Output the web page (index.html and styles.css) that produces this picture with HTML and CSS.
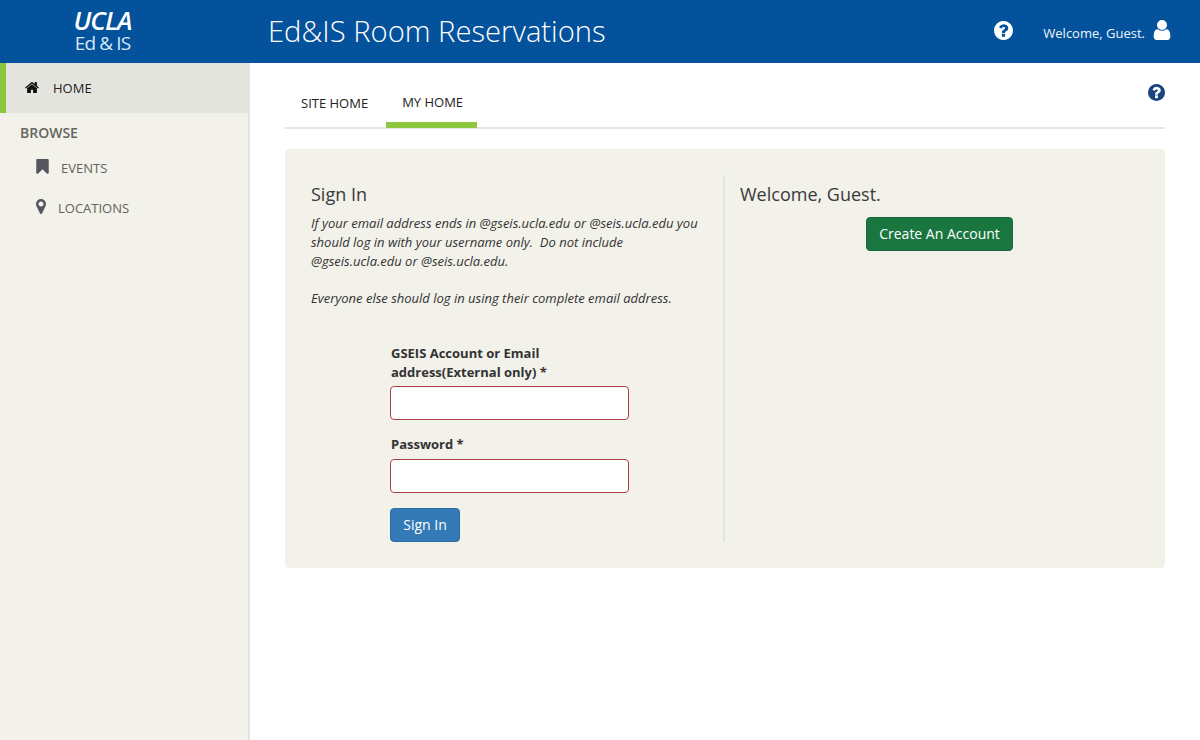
FILE: index.html
```html
<!DOCTYPE html>
<html lang="en">
<head>
<meta charset="utf-8">
<title>Ed&amp;IS Room Reservations</title>
<link rel="stylesheet" href="styles.css">
</head>
<body>
<header class="topbar">
  <div class="logo-area">
    <div class="logo">
      <span class="logo-ucla">UCLA</span>
      <span class="logo-sub">Ed &amp; IS</span>
    </div>
  </div>
  <h1 class="site-title">Ed&amp;IS Room Reservations</h1>
  <div class="top-right">
    <svg class="icon top-help" viewBox="0 0 1536 1536"><path transform="translate(-128 -128)" d="M1024 1376v-192q0-14-9-23t-23-9h-192q-14 0-23 9t-9 23v192q0 14 9 23t23 9h192q14 0 23-9t9-23zm256-672q0-88-55.5-163t-138.5-116-170-41q-243 0-371 213-15 24 8 42l132 100q7 6 19 6 16 0 25-12 53-68 86-92 34-24 86-24 48 0 85.5 26t37.5 59q0 38-20 61t-68 45q-63 28-115.5 86.5t-52.5 125.5v36q0 14 9 23t23 9h192q14 0 23-9t9-23q0-19 21.5-49.5t54.5-49.5q32-18 49-28.5t46-35 44.5-48 28-60.5 12.5-81zm384 192q0 209-103 385.5t-279.5 279.5-385.5 103-385.5-103-279.5-279.5-103-385.5 103-385.5 279.5-279.5 385.5-103 385.5 103 279.5 279.5 103 385.5z"/></svg>
    <span class="welcome">Welcome, Guest.</span>
    <svg class="icon top-user" viewBox="256 128 1280 1536"><path d="M1536 1399q0 109-62.5 187t-150.5 78h-854q-88 0-150.5-78t-62.5-187q0-85 8.5-160.5t31.5-152 58.5-131 94-89 134.5-34.5q131 128 313 128t313-128q76 0 134.5 34.5t94 89 58.5 131 31.5 152 8.5 160.5zm-256-887q0 159-112.5 271.5t-271.5 112.5-271.5-112.5-112.5-271.5 112.5-271.5 271.5-112.5 271.5 112.5 112.5 271.5z"/></svg>
  </div>
</header>
<div class="layout">
  <nav class="sidebar">
    <a class="nav-home">
      <svg class="icon home-icon" viewBox="96 128 1600 1408"><path d="M1472 992v480q0 26-19 45t-45 19h-384v-384h-256v384h-384q-26 0-45-19t-19-45v-480q0-1 .5-3t.5-3l575-474 575 474q1 2 1 6zm223-69l-62 74q-8 9-21 11h-3q-13 0-21-7l-692-577-692 577q-12 8-24 7-13-2-21-11l-62-74q-8-10-7-23.5t11-21.5l719-599q32-26 76-26t76 26l244 204v-195q0-14 9-23t23-9h192q14 0 23 9t9 23v408l219 182q10 8 11 21.5t-7 23.5z"/></svg>
      <span>HOME</span>
    </a>
    <div class="nav-heading">BROWSE</div>
    <a class="nav-item nav-events">
      <svg class="icon events-icon" viewBox="0 128 1280 1536"><path d="M1164 128q23 0 44 9 33 13 52.5 41t19.5 62v1289q0 34-19.5 62t-52.5 41q-19 8-44 8-48 0-83-32l-441-424-441 424q-36 33-83 33-23 0-44-9-33-13-52.5-41t-19.5-62v-1289q0-34 19.5-62t52.5-41q21-9 44-9h1048z"/></svg>
      <span>EVENTS</span>
    </a>
    <a class="nav-item nav-locations">
      <svg class="icon locations-icon" viewBox="0 128 1024 1536"><path d="M768 640q0-106-75-181t-181-75-181 75-75 181 75 181 181 75 181-75 75-181zm256 0q0 109-33 179l-364 774q-16 33-47.5 52t-67.5 19-67.5-19-46.5-52l-365-774q-33-70-33-179 0-212 150-362t362-150 362 150 150 362z"/></svg>
      <span>LOCATIONS</span>
    </a>
  </nav>
  <main class="content">
    <div class="tabs">
      <a class="tab tab-site">SITE HOME</a>
      <a class="tab tab-active">MY HOME</a>
      <svg class="icon page-help" viewBox="0 0 1536 1536"><path transform="translate(-128 -128)" d="M1024 1376v-192q0-14-9-23t-23-9h-192q-14 0-23 9t-9 23v192q0 14 9 23t23 9h192q14 0 23-9t9-23zm256-672q0-88-55.5-163t-138.5-116-170-41q-243 0-371 213-15 24 8 42l132 100q7 6 19 6 16 0 25-12 53-68 86-92 34-24 86-24 48 0 85.5 26t37.5 59q0 38-20 61t-68 45q-63 28-115.5 86.5t-52.5 125.5v36q0 14 9 23t23 9h192q14 0 23-9t9-23q0-19 21.5-49.5t54.5-49.5q32-18 49-28.5t46-35 44.5-48 28-60.5 12.5-81zm384 192q0 209-103 385.5t-279.5 279.5-385.5 103-385.5-103-279.5-279.5-103-385.5 103-385.5 279.5-279.5 385.5-103 385.5 103 279.5 279.5 103 385.5z"/></svg>
    </div>
    <section class="panel">
      <div class="col-left">
        <h2 class="panel-title">Sign In</h2>
        <p class="help-text">If your email address ends in @gseis.ucla.edu or @seis.ucla.edu you should log in with your username only.&nbsp; Do not include @gseis.ucla.edu or @seis.ucla.edu.<br><br>Everyone else should log in using their complete email address.</p>
        <form class="login-form">
          <label class="field-label" for="user">GSEIS Account or Email address(External only) *</label>
          <input class="field-input" id="user" type="text">
          <label class="field-label label-password" for="pass">Password *</label>
          <input class="field-input" id="pass" type="password">
          <button class="btn btn-signin" type="button">Sign In</button>
        </form>
      </div>
      <div class="col-right">
        <h2 class="panel-title">Welcome, Guest.</h2>
        <div class="create-row"><button class="btn btn-create" type="button">Create An Account</button></div>
      </div>
    </section>
  </main>
</div>
</body>
</html>
```
FILE: styles.css
```css
* { box-sizing: border-box; }
html, body { margin: 0; height: 100%; }
body {
  font-family: "Open Sans", "Noto Sans", sans-serif;
  font-size: 13px;
  line-height: 1.43;
  color: #333;
  background: #fff;
  overflow: hidden;
}
.icon { display: block; fill: currentColor; flex: none; }

.topbar {
  height: 63px;
  background: #04529c;
  color: #fff;
  display: flex;
  align-items: center;
}
.logo-area { width: 268px; padding-left: 51px; flex: none; }
.logo {
  width: 106px;
  height: 63px;
  display: flex;
  flex-direction: column;
  align-items: center;
  justify-content: center;
  padding-right: 3px;
}
.logo-ucla { font: italic 600 26px/23px "Open Sans", sans-serif; letter-spacing: -0.9px; color: #fff; }
.logo-sub { font: 400 19px/22px "Open Sans", sans-serif; letter-spacing: -0.9px; color: #d6e6f4; margin-bottom: 1px; }
.site-title { margin: -2px 0 0; font-size: 29.2px; font-weight: 300; line-height: 40px; flex: 1; }
.top-right { display: flex; align-items: center; padding-right: 29px; }
.top-help { width: 19px; height: 19px; margin-right: 30px; margin-top: -2px; }
.welcome { font-size: 13px; color: #eef5fb; margin-right: 8px; margin-top: 3px; }
.top-user { width: 18px; height: 20px; margin-top: -2px; }

.layout { display: flex; height: 677px; }
.sidebar {
  width: 250px;
  flex: none;
  background: #f2f1ea;
  border-right: 2px solid #e4e4e0;
}
.nav-home {
  display: flex;
  align-items: center;
  height: 50px;
  margin-right: -2px;
  background: #e4e4df;
  border-left: 6px solid #8dc63f;
  color: #222;
  padding-left: 19px;
}
.home-icon { width: 14px; height: 12px; margin-top: -2px; margin-right: 14px; color: #111; }
.nav-heading { margin: 9px 0 0 20px; font-size: 14px; font-weight: 600; color: #666460; line-height: 22px; }
.nav-item { display: flex; align-items: center; height: 40px; color: #64625e; }
.nav-events { margin-top: 4px; padding-left: 36px; }
.events-icon { width: 13px; height: 15px; margin-right: 12px; margin-top: -3px; color: #55555f; }
.nav-locations { padding-left: 36px; }
.locations-icon { width: 10px; height: 15px; margin-right: 12px; margin-top: -3px; color: #55555f; }

.content { flex: 1; padding: 0 35px; min-width: 0; }
.tabs {
  position: relative;
  display: flex;
  height: 66px;
  padding-top: 16px;
  border-bottom: 2px solid #e6e6e6;
  color: #222;
}
.tab { display: block; height: 48px; padding: 0 16px; line-height: 48px; margin-right: 2px; }
.tab-site { line-height: 49px; }
.tab-active { line-height: 46px; border-bottom: 6px solid #8dc63f; height: 49px; padding-right: 14px; }
.page-help { position: absolute; right: 0; top: 21px; width: 17px; height: 17px; color: #1c4480; }

.panel {
  display: flex;
  height: 419px;
  margin-top: 20px;
  padding: 26px;
  background: #f2f1ea;
  border-radius: 4px;
}
.col-left { width: 414px; flex: none; border-right: 2px solid #e4e4e0; }
.col-right { flex: 1; padding-left: 15px; }
.panel-title { margin: 6px 0 0; font-size: 18px; font-weight: 400; line-height: 26px; color: #3a3a3a; }
.help-text { margin: 7.4px 0 0; width: 395px; font-size: 13px; font-style: italic; line-height: 18.6px; }
.login-form { display: flex; flex-direction: column; align-items: flex-start; width: 239px; margin: 36.6px 0 0 79px; }
.field-label { display: block; font-weight: 700; line-height: 19px; width: 190px; padding-left: 1px; margin-bottom: 4px; }
.label-password { margin-top: 15px; margin-bottom: 5px; }
.field-input {
  display: block;
  width: 239px;
  height: 34px;
  background: #fff;
  border: 1px solid #a94442;
  border-radius: 4px;
}
.btn {
  display: block;
  height: 34px;
  font-family: inherit;
  font-size: 14px;
  color: #fff;
  border-radius: 4px;
  padding: 0;
}
.btn-signin { margin-top: 15px; width: 70px; background: #337ab7; border: 1px solid #2e6da4; }
.create-row { display: flex; justify-content: center; margin-top: 10px; }
.btn-create { width: 147px; padding-bottom: 2px; background: #19763f; border: 1px solid #176a39; }
```
